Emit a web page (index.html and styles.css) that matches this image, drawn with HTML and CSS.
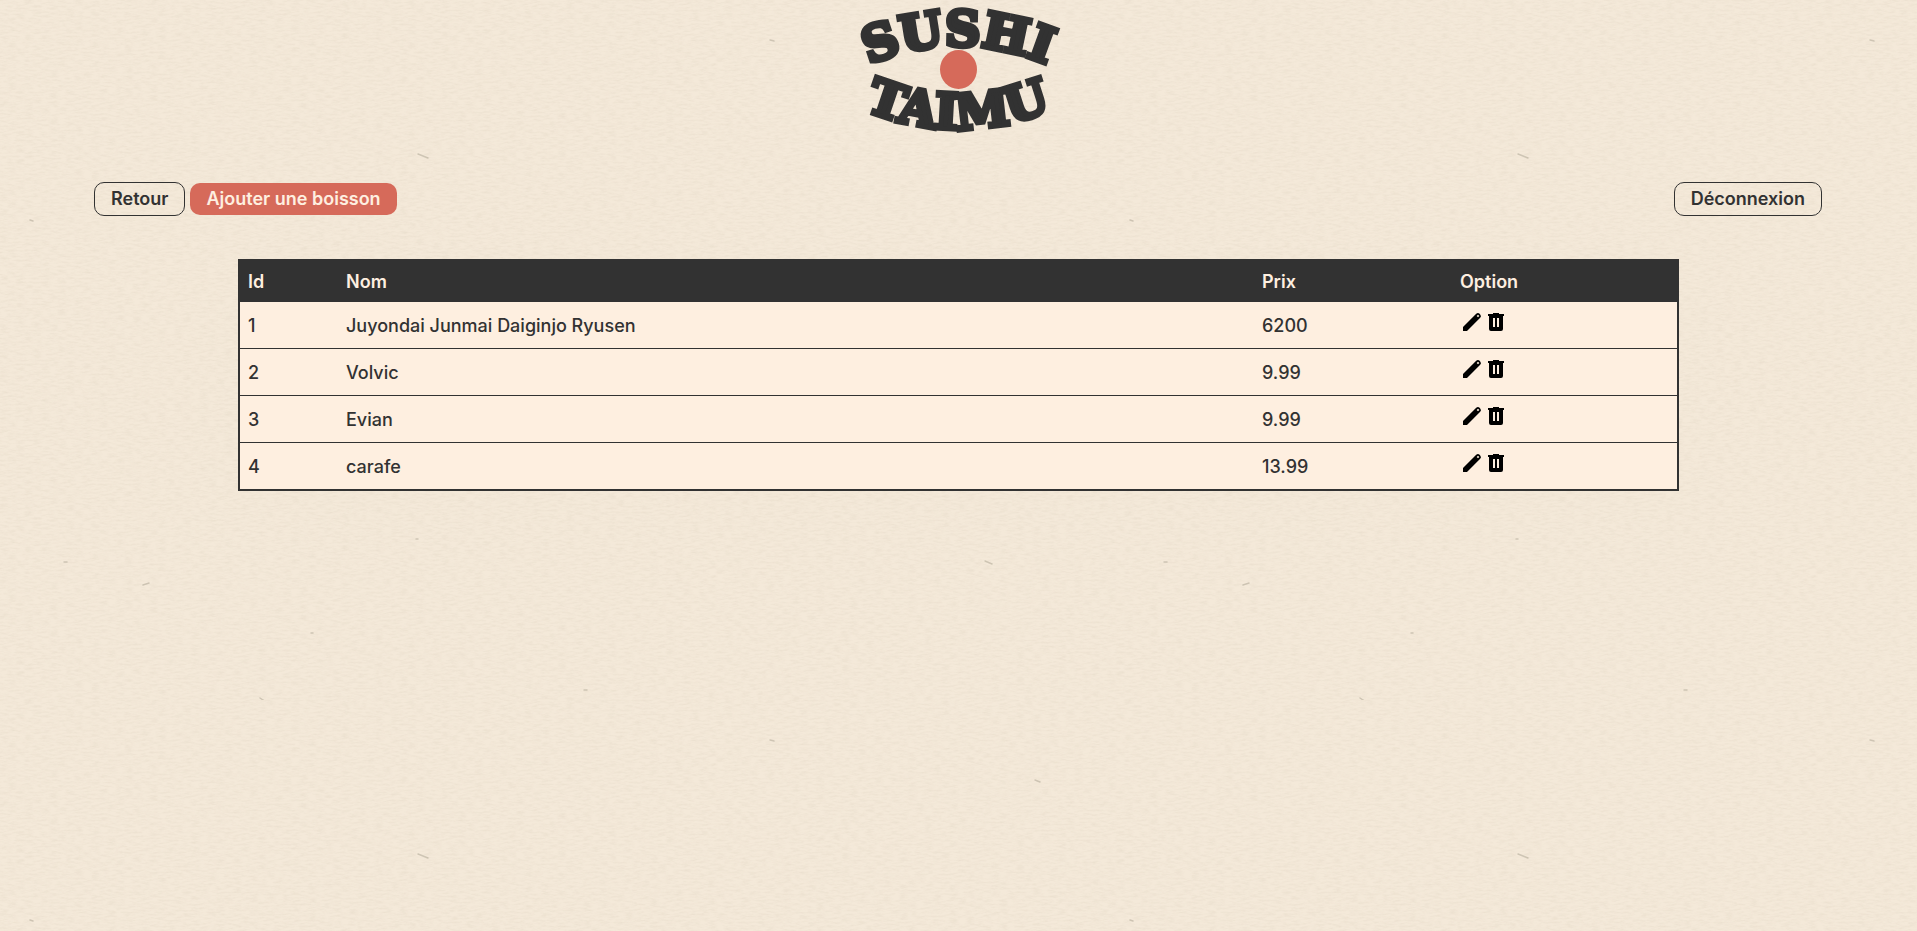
FILE: index.html
```
<!DOCTYPE html>
<html lang="fr">
<head>
<meta charset="utf-8">
<title>Sushi Taimu - Boissons</title>
<link rel="stylesheet" href="styles.css">
</head>
<body>
<svg class="symbols" aria-hidden="true">
  <symbol id="pencil" viewBox="0 0 24 24"><path fill-rule="evenodd" d="M3 21v-4L16.2 3.8q1.8-1.6 3.4 0l.6.6q1.6 1.6 0 3.4L7 21zM18 4.700l1.300 1.300-1.300 1.300-1.300-1.300z"/></symbol>
  <symbol id="trash" viewBox="0 0 24 24"><path fill-rule="evenodd" d="M9 3h6v1h5v2h-1v13q0 2-2 2H7q-2 0-2-2V6H4V4h5zM9 8v9h2V8zM13 8v9h2V8z"/></symbol>
</svg>
<header class="header">
  <svg class="logo" viewBox="0 0 240 145" role="img" aria-label="Sushi Taimu">
    <path id="arc-top" class="arc" d="M26 66Q119 26 212 66"/>
    <path id="arc-bottom" class="arc" d="M14 105Q119 153 224 105"/>
    <text class="logo-text"><textPath href="#arc-top" startOffset="50%">SUSHI</textPath></text>
    <text class="logo-text"><textPath href="#arc-bottom" startOffset="50%">TAIMU</textPath></text>
    <ellipse class="logo-sun" cx="119.500" cy="69.500" rx="18.500" ry="19.500"/>
  </svg>
</header>
<nav class="toolbar">
  <div class="actions">
    <button class="btn" type="button">Retour</button>
    <button class="btn btn-primary" type="button">Ajouter une boisson</button>
  </div>
  <button class="btn" type="button">Déconnexion</button>
</nav>
<main>
  <table class="drinks">
    <thead>
      <tr><th class="col-id">Id</th><th>Nom</th><th class="col-price">Prix</th><th class="col-option">Option</th></tr>
    </thead>
    <tbody>
      <tr><td>1</td><td>Juyondai Junmai Daiginjo Ryusen</td><td>6200</td><td class="options"><button class="icon" type="button" aria-label="Modifier"><svg><use href="#pencil"/></svg></button><button class="icon" type="button" aria-label="Supprimer"><svg><use href="#trash"/></svg></button></td></tr>
      <tr><td>2</td><td>Volvic</td><td>9.99</td><td class="options"><button class="icon" type="button" aria-label="Modifier"><svg><use href="#pencil"/></svg></button><button class="icon" type="button" aria-label="Supprimer"><svg><use href="#trash"/></svg></button></td></tr>
      <tr><td>3</td><td>Evian</td><td>9.99</td><td class="options"><button class="icon" type="button" aria-label="Modifier"><svg><use href="#pencil"/></svg></button><button class="icon" type="button" aria-label="Supprimer"><svg><use href="#trash"/></svg></button></td></tr>
      <tr><td>4</td><td>carafe</td><td>13.99</td><td class="options"><button class="icon" type="button" aria-label="Modifier"><svg><use href="#pencil"/></svg></button><button class="icon" type="button" aria-label="Supprimer"><svg><use href="#trash"/></svg></button></td></tr>
    </tbody>
  </table>
</main>
</body>
</html>
```

FILE: styles.css
```
* { box-sizing: border-box; }

body {
  margin: 0;
  min-height: 100vh;
  color: #323232;
  font: 500 18px/26px Inter, "Liberation Sans", sans-serif;
  background-color: #f4e9d9;
  /* paper grain */
  background-image: url("data:image/svg+xml,%3Csvg xmlns='http://www.w3.org/2000/svg' width='1100' height='700'%3E%3Cfilter id='g' x='0' y='0' width='100%25' height='100%25'%3E%3CfeTurbulence type='fractalNoise' baseFrequency='.12 .5' numOctaves='3' seed='4' stitchTiles='stitch'/%3E%3CfeColorMatrix values='0 0 0 0 .62 0 0 0 0 .54 0 0 0 0 .42 .4 0 0 0 -.15'/%3E%3C/filter%3E%3Crect width='1100' height='700' filter='url(%23g)'/%3E%3Cg fill='none' stroke='%23aaa190' stroke-opacity='.5' stroke-width='1.5' stroke-linecap='round'%3E%3Cpath d='M418 154l10 4M64 562h3M143 585l6-2M311 633h2M416 539h2M985 561l7 3M1035 80l5 2M260 698l6 4M930 300l3 1M584 690h3M770 40l4 1M30 220l3 1'/%3E%3C/g%3E%3C/svg%3E");
}

button {
  font: inherit;
  color: inherit;
  cursor: pointer;
}

.symbols {
  position: absolute;
  width: 0;
  height: 0;
}

.header {
  display: flex;
  justify-content: center;
}

.logo {
  width: 240px;
  height: 145px;
}

.arc { fill: none; }

.logo-text {
  font: 700 49px "DejaVu Serif", serif;
  text-anchor: middle;
  fill: #323232;
  stroke: #323232;
  stroke-width: 5px;
}

.logo-sun { fill: #d66a5a; }

.toolbar {
  display: flex;
  justify-content: space-between;
  align-items: center;
  padding: 37px 95px 43px 94px;
}

.actions {
  display: flex;
  align-items: center;
  gap: 5px;
}

.btn {
  padding: 3px 16px;
  border: 1px solid #323232;
  border-radius: 10px;
  background: none;
  font-weight: 600;
}

.btn-primary {
  border: 0;
  background: #d66a5a;
  color: #feefe0;
}

.drinks {
  width: 90%;
  max-width: 1441px;
  margin: 0 auto;
  border: 2px solid #323232;
  border-spacing: 0;
  table-layout: fixed;
  background: #feefe0;
}

.drinks th {
  padding: 8px 8px 7px;
  background: #323232;
  color: #feefe0;
  font-weight: 600;
  text-align: left;
}

.drinks td {
  padding: 11px 8px 9px;
  border-bottom: 1px solid #323232;
}

.drinks tr:last-child td { border-bottom: 0; }

.col-id { width: 98px; }
.col-price { width: 198px; }
.col-option { width: 225px; }

.drinks .options {
  padding: 8px;
  vertical-align: top;
}

.icon {
  padding: 0;
  border: 0;
  background: none;
  color: #000;
  vertical-align: top;
}

.icon svg {
  display: block;
  width: 24px;
  height: 24px;
  fill: currentColor;
}
```
